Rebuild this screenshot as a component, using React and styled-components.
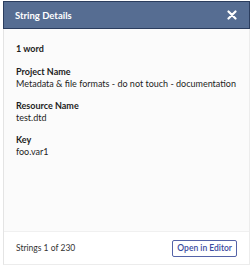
import styled, { createGlobalStyle } from "styled-components";

const Global = createGlobalStyle`
  body {
    margin: 0;
    background: #ffffff;
    font-family: "Lato", "Liberation Sans", sans-serif;
  }
`;

const Page = styled.div`
  width: 252px;
  height: 269px;
  padding: 1px 2px 4px 3px;
  box-sizing: border-box;
`;

const Panel = styled.div`
  height: 100%;
  display: flex;
  flex-direction: column;
  border-left: 1px solid #e4e4e4;
  border-right: 1px solid #ececec;
  border-bottom: 1px solid #ececec;
  box-sizing: border-box;
`;

const Header = styled.div`
  height: 28px;
  margin-left: -1px;
  margin-right: -1px;
  box-sizing: border-box;
  background: #566d92;
  border: 1px solid #2b3d5e;
  display: flex;
  align-items: center;
  justify-content: space-between;
  padding: 0 12px 0 11px;
  color: #ffffff;
`;

const Title = styled.div`
  font-size: 9.5px;
  font-weight: 700;
`;

const Close = styled.svg`
  width: 10px;
  height: 10px;
`;

const Body = styled.div`
  flex: 1;
  background: #fbfbfb;
  padding: 14px 12px 0 12px;
  color: #1d1d1d;
`;

const Count = styled.div`
  font-size: 9px;
  font-weight: 700;
  margin-bottom: 12px;
`;

const Field = styled.div`
  margin-bottom: 10px;
`;

const Label = styled.div`
  font-size: 9px;
  font-weight: 700;
  line-height: 12px;
`;

const Value = styled.div`
  font-size: 9px;
  line-height: 12px;
  white-space: nowrap;
`;

const Footer = styled.div`
  height: 32px;
  background: #ffffff;
  border-top: 1px solid #f0f0f0;
  display: flex;
  align-items: center;
  justify-content: space-between;
  padding: 0 12px;
  font-size: 8.5px;
  color: #333333;
`;

const Button = styled.button`
  height: 17px;
  padding: 0 4px;
  background: #ffffff;
  border: 1px solid #5463a8;
  border-radius: 2px;
  color: #3a4aa0;
  font-family: inherit;
  font-size: 8.5px;
  font-weight: 600;
`;

export default function App() {
  return (
    <>
      <Global />
      <Page>
        <Panel>
          <Header>
            <Title>String Details</Title>
            <Close viewBox="0 0 10 10">
              <path d="M1.5 1.5 L8.5 8.5 M8.5 1.5 L1.5 8.5" stroke="#fff" strokeWidth="2.2" strokeLinecap="round" />
            </Close>
          </Header>
          <Body>
            <Count>1 word</Count>
            <Field>
              <Label>Project Name</Label>
              <Value>Metadata &amp; file formats - do not touch - documentation</Value>
            </Field>
            <Field>
              <Label>Resource Name</Label>
              <Value>test.dtd</Value>
            </Field>
            <Field>
              <Label>Key</Label>
              <Value>foo.var1</Value>
            </Field>
          </Body>
          <Footer>
            <span>Strings 1 of 230</span>
            <Button>Open in Editor</Button>
          </Footer>
        </Panel>
      </Page>
    </>
  );
}
